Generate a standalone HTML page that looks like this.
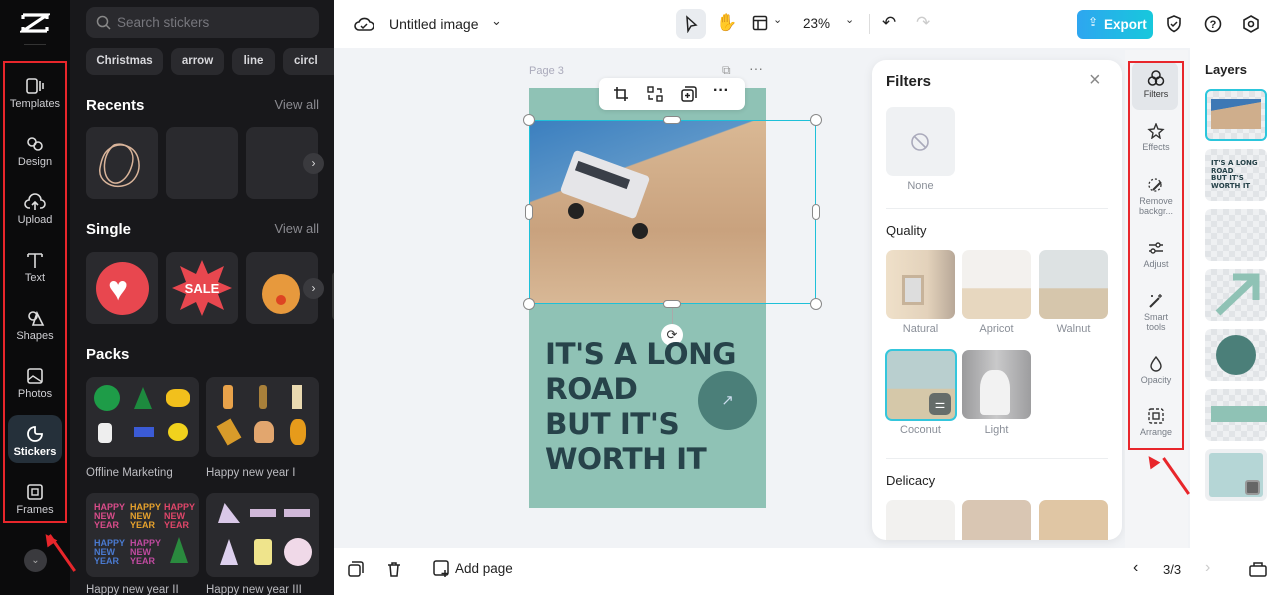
<!DOCTYPE html>
<html><head><meta charset="utf-8"><style>
*{box-sizing:border-box;margin:0;padding:0}
body{width:1280px;height:595px;overflow:hidden;font-family:"Liberation Sans",sans-serif;background:#f1f3f6;position:relative}
.a{position:absolute}
.rail{left:0;top:0;width:70px;height:595px;background:#0b0b0c}
.side{left:70px;top:0;width:264px;height:595px;background:#18181b;overflow:hidden}
.ri{position:absolute;left:6px;width:58px;text-align:center;color:#cfcfd3;font-size:11px}
.ri svg{display:block;margin:0 auto 3px}
.chip{position:absolute;top:48px;height:27px;border-radius:8px;background:#2a2a2e;color:#d8d8dc;font-size:11.5px;font-weight:bold;line-height:27px;text-align:center}
.h{position:absolute;color:#fff;font-weight:bold;font-size:15px}
.va{position:absolute;right:15px;color:#8a8a90;font-size:13px}
.tile{position:absolute;width:72px;height:72px;background:#2a2a2e;border-radius:8px}
.pk{position:absolute;width:113px;height:80px;background:#2a2a2e;border-radius:8px}
.top{left:334px;top:0;width:946px;height:48px;background:#fff}
.bot{left:334px;top:548px;width:946px;height:47px;background:#fff}
.fp{left:872px;top:60px;width:250px;height:480px;background:#fff;border-radius:14px;box-shadow:0 2px 10px rgba(0,0,0,.08);overflow:hidden}
.ft{position:absolute;width:69px;height:69px;border-radius:7px}
.fl{position:absolute;width:69px;text-align:center;font-size:11px;color:#8a8f98}
.tc{left:1125px;top:50px;width:63px;height:498px;background:#f4f5f7}
.ti{position:absolute;left:8px;width:46px;text-align:center;font-size:9px;color:#777d86;line-height:10px}
.ti svg{display:block;margin:0 auto 3px}
.lay{left:1190px;top:48px;width:90px;height:500px;background:#fff}
.lt{position:absolute;left:15px;width:62px;height:52px;border-radius:6px;background-color:#eef0f2;background-image:linear-gradient(45deg,#e1e4e7 25%,transparent 25%,transparent 75%,#e1e4e7 75%),linear-gradient(45deg,#e1e4e7 25%,transparent 25%,transparent 75%,#e1e4e7 75%);background-size:12px 12px;background-position:0 0,6px 6px}
.hd{position:absolute;width:12px;height:12px;border-radius:50%;background:#fff;border:1px solid #888}
</style></head><body>
<div class="a rail">
 <svg class="a" style="left:20px;top:12px" width="30" height="22" viewBox="0 0 30 22"><path d="M3 3h24L3 19h24M3 3v4M27 3v4M3 19v-4M27 19v-4" stroke="#fff" stroke-width="3.2" fill="none"/></svg>
 <div class="a" style="left:24px;top:44px;width:22px;height:1px;background:#333"></div>
 <div class="ri" style="top:77px"><svg width="20" height="18"><rect x="2" y="2" width="10" height="14" rx="2" stroke="#ddd" fill="none" stroke-width="1.6"/><path d="M15 4v10M18 6v6" stroke="#ddd" stroke-width="1.6"/></svg>Templates</div>
 <div class="ri" style="top:135px"><svg width="20" height="18"><circle cx="7" cy="7" r="4" stroke="#ddd" fill="none" stroke-width="1.6"/><circle cx="13" cy="11" r="4" stroke="#ddd" fill="none" stroke-width="1.6"/></svg>Design</div>
 <div class="ri" style="top:193px"><svg width="22" height="18"><path d="M6 15H5a4 4 0 010-8 6 6 0 0112 0 4 4 0 010 8h-1M11 9v8M8 12l3-3 3 3" stroke="#ddd" fill="none" stroke-width="1.6"/></svg>Upload</div>
 <div class="ri" style="top:251px"><svg width="20" height="18"><path d="M3 3h14M10 3v14M3 3v3M17 3v3" stroke="#ddd" fill="none" stroke-width="1.6"/></svg>Text</div>
 <div class="ri" style="top:309px"><svg width="20" height="18"><circle cx="8" cy="7" r="4" stroke="#ddd" fill="none" stroke-width="1.6"/><path d="M12 4l6 12H8z" stroke="#ddd" fill="none" stroke-width="1.6"/></svg>Shapes</div>
 <div class="ri" style="top:367px"><svg width="20" height="18"><rect x="3" y="2" width="14" height="14" rx="2" stroke="#ddd" fill="none" stroke-width="1.6"/><path d="M3 13l5-4 9 6" stroke="#ddd" fill="none" stroke-width="1.4"/></svg>Photos</div>
 <div class="a" style="left:8px;top:415px;width:54px;height:48px;border-radius:10px;background:#25303a"></div>
 <div class="ri" style="top:425px;color:#fff;font-weight:bold"><svg width="20" height="18"><path d="M10 2a7 7 0 107 7h-5a2 2 0 01-2-2z" stroke="#fff" fill="none" stroke-width="1.8"/></svg>Stickers</div>
 <div class="ri" style="top:483px"><svg width="20" height="18"><rect x="3" y="2" width="14" height="14" rx="2" stroke="#ddd" fill="none" stroke-width="1.6"/><rect x="7" y="6" width="6" height="6" stroke="#ddd" fill="none" stroke-width="1.4"/></svg>Frames</div>
 <div class="a" style="left:24px;top:549px;width:23px;height:23px;border-radius:50%;background:#3a3a3e;color:#aaa;font-size:10px;text-align:center;line-height:23px">⌄</div>
 <div class="a" style="left:3px;top:61px;width:64px;height:462px;border:2px solid #e8262b"></div>
</div>
<div class="a side">
 <div class="a" style="left:16px;top:7px;width:233px;height:31px;border-radius:9px;background:#2a2a2e"></div>
 <svg class="a" style="left:26px;top:15px" width="15" height="15"><circle cx="6.5" cy="6.5" r="5" stroke="#888" fill="none" stroke-width="1.5"/><path d="M10 10l4 4" stroke="#888" stroke-width="1.5"/></svg>
 <div class="a" style="left:47px;top:15px;color:#77777d;font-size:13.5px">Search stickers</div>
 <div class="chip" style="left:16px;width:77px">Christmas</div>
 <div class="chip" style="left:101px;width:53px">arrow</div>
 <div class="chip" style="left:162px;width:43px">line</div>
 <div class="chip" style="left:213px;width:51px;border-radius:8px 0 0 8px;text-align:left;padding-left:11px">circl</div>
 <div class="h" style="left:16px;top:97px">Recents</div><div class="va" style="top:97px">View all</div>
 <div class="tile" style="left:16px;top:127px"><svg width="72" height="72"><g stroke="#d9b49a" fill="none" stroke-width="1.5"><path d="M20 25c10-12 28-8 32 6s-4 26-16 28-24-6-22-18 6-16 6-16"/><path d="M28 18c12-4 22 6 18 20s-14 22-22 16-8-26 4-36"/></g></svg></div>
 <div class="tile" style="left:96px;top:127px"></div>
 <div class="tile" style="left:176px;top:127px"></div>
 <div class="a" style="left:233px;top:153px;width:21px;height:21px;border-radius:50%;background:#3a3a3e;color:#ddd;font-size:12px;text-align:center;line-height:21px">›</div>
 <div class="h" style="left:16px;top:221px">Single</div><div class="va" style="top:221px">View all</div>
 <div class="tile" style="left:16px;top:252px"><div class="a" style="left:10px;top:10px;width:53px;height:53px;border-radius:50%;background:#e8474f"></div><div class="a" style="left:22px;top:20px;color:#fff;font-size:34px;line-height:34px">♥</div></div>
 <div class="tile" style="left:96px;top:252px"><svg width="72" height="72"><polygon points="36,8 42,22 58,14 52,30 66,36 52,42 58,58 42,50 36,64 30,50 14,58 20,42 6,36 20,30 14,14 30,22" fill="#e8474f"/><text x="36" y="41" font-size="13" font-weight="bold" fill="#fff" text-anchor="middle" font-family="Liberation Sans">SALE</text></svg></div>
 <div class="tile" style="left:176px;top:252px"><div class="a" style="left:16px;top:22px;width:38px;height:40px;border-radius:50%;background:#e7993d"></div><div class="a" style="left:30px;top:43px;width:10px;height:10px;border-radius:50%;background:#d42"></div></div>
 <div class="a" style="left:233px;top:278px;width:21px;height:21px;border-radius:50%;background:#3a3a3e;color:#ddd;font-size:12px;text-align:center;line-height:21px">›</div>
 <div class="a" style="left:262px;top:272px;width:8px;height:48px;border-radius:4px;background:#333"></div>
 <div class="h" style="left:16px;top:346px">Packs</div>
 <div class="pk" style="left:16px;top:377px"><div class="a" style="left:8px;top:8px;width:26px;height:26px;border-radius:50%;background:#1e9c48"></div><div class="a" style="left:48px;top:10px;width:18px;height:22px;background:#1d8a3e;clip-path:polygon(50% 0,100% 100%,0 100%)"></div><div class="a" style="left:80px;top:12px;width:24px;height:18px;background:#f2c01c;border-radius:40%"></div><div class="a" style="left:12px;top:46px;width:14px;height:20px;background:#eee;border-radius:4px"></div><div class="a" style="left:48px;top:50px;width:20px;height:10px;background:#3b5bd6"></div><div class="a" style="left:82px;top:46px;width:20px;height:18px;background:#f1d21d;border-radius:50%"></div></div>
 <div class="pk" style="left:136px;top:377px"><div class="a" style="left:17px;top:8px;width:10px;height:24px;background:#e8a24a;border-radius:3px"></div><div class="a" style="left:53px;top:8px;width:8px;height:24px;background:#a8803a;border-radius:3px"></div><div class="a" style="left:86px;top:8px;width:10px;height:24px;background:#e9d9b0"></div><div class="a" style="left:15px;top:44px;width:16px;height:22px;background:#d89b2a;transform:rotate(-30deg)"></div><div class="a" style="left:48px;top:44px;width:20px;height:22px;background:#e2a66e;border-radius:40% 40% 4px 4px"></div><div class="a" style="left:84px;top:42px;width:16px;height:26px;background:#e69b1b;border-radius:40%"></div></div>
 <div class="a" style="left:16px;top:467px;color:#bdbdc2;font-size:11.5px">Offline Marketing</div>
 <div class="a" style="left:136px;top:467px;color:#bdbdc2;font-size:11.5px">Happy new year I</div>
 <div class="pk" style="left:16px;top:493px;height:84px"><div class="a" style="left:8px;top:10px;font-size:9px;font-weight:bold;color:#d94c8a;line-height:9px">HAPPY<br>NEW<br>YEAR</div><div class="a" style="left:44px;top:10px;font-size:9px;font-weight:bold;color:#e7a22c;line-height:9px">HAPPY<br>NEW<br>YEAR</div><div class="a" style="left:78px;top:10px;font-size:9px;font-weight:bold;color:#e0466a;line-height:9px">HAPPY<br>NEW<br>YEAR</div><div class="a" style="left:8px;top:46px;font-size:9px;font-weight:bold;color:#4a7ad0;line-height:9px">HAPPY<br>NEW<br>YEAR</div><div class="a" style="left:44px;top:46px;font-size:9px;font-weight:bold;color:#c04aa0;line-height:9px">HAPPY<br>NEW<br>YEAR</div><div class="a" style="left:84px;top:44px;width:18px;height:26px;background:#2a8a3e;clip-path:polygon(50% 0,100% 100%,0 100%)"></div></div>
 <div class="pk" style="left:136px;top:493px;height:84px"><div class="a" style="left:12px;top:10px;width:22px;height:20px;background:#d9c8e8;clip-path:polygon(30% 0,100% 100%,0 100%)"></div><div class="a" style="left:44px;top:16px;width:26px;height:8px;background:#d0b8d8"></div><div class="a" style="left:78px;top:16px;width:26px;height:8px;background:#d0b8d8"></div><div class="a" style="left:14px;top:46px;width:18px;height:26px;background:#ddd0ee;clip-path:polygon(50% 0,100% 100%,0 100%)"></div><div class="a" style="left:48px;top:46px;width:18px;height:26px;background:#efe48c;border-radius:3px"></div><div class="a" style="left:78px;top:45px;width:28px;height:28px;background:#f0d9e8;border-radius:50%"></div></div>
 <div class="a" style="left:16px;top:584px;color:#bdbdc2;font-size:11.5px">Happy new year II</div>
 <div class="a" style="left:136px;top:584px;color:#bdbdc2;font-size:11.5px">Happy new year III</div>
</div>
<div class="a" style="left:48px;top:535px;width:3px;height:44px;background:#e8262b;transform:rotate(-35deg);transform-origin:top"></div>
<div class="a" style="left:43px;top:533px;width:0;height:0;border-left:6px solid transparent;border-right:6px solid transparent;border-bottom:12px solid #e8262b;transform:rotate(-35deg)"></div>

<div class="a top">
 <svg class="a" style="left:20px;top:15px" width="20" height="18"><path d="M5 15a4 4 0 010-8 6 6 0 0111 0 4 4 0 010 8z" stroke="#222" fill="none" stroke-width="1.6"/><path d="M7 11l2 2 4-4" stroke="#222" fill="none" stroke-width="1.5"/></svg>
 <div class="a" style="left:55px;top:16px;font-size:14px;color:#222">Untitled image</div>
 <div class="a" style="left:157px;top:13px;font-size:13px;color:#333">⌄</div>
 <div class="a" style="left:342px;top:9px;width:30px;height:30px;border-radius:7px;background:#e9ecf0"></div>
 <svg class="a" style="left:349px;top:15px" width="16" height="18"><path d="M4 2l9 8-5 1-3 5z" stroke="#222" fill="none" stroke-width="1.5"/></svg>
 <div class="a" style="left:382px;top:13px;font-size:17px;color:#222">✋</div>
 <svg class="a" style="left:418px;top:15px" width="16" height="16"><rect x="1.5" y="1.5" width="13" height="13" rx="1.5" stroke="#222" fill="none" stroke-width="1.5"/><path d="M1.5 5.5h13M6 5.5v9" stroke="#222" stroke-width="1.5"/></svg>
 <div class="a" style="left:439px;top:13px;font-size:11px;color:#333">⌄</div>
 <div class="a" style="left:469px;top:16px;font-size:13.5px;color:#222">23%</div>
 <div class="a" style="left:511px;top:13px;font-size:11px;color:#333">⌄</div>
 <div class="a" style="left:535px;top:14px;width:1px;height:20px;background:#ddd"></div>
 <div class="a" style="left:548px;top:13px;font-size:17px;color:#222">↶</div>
 <div class="a" style="left:582px;top:13px;font-size:17px;color:#ccc">↷</div>
 <div class="a" style="left:743px;top:10px;width:76px;height:29px;border-radius:6px;background:linear-gradient(90deg,#2ea6f0,#17c8dc);color:#fff;font-weight:bold;font-size:13.5px;line-height:29px;padding-left:27px">Export</div>
 <div class="a" style="left:754px;top:15px;font-size:12px;color:#fff">⇪</div>
 <svg class="a" style="left:832px;top:15px" width="16" height="18"><path d="M8 1l6 2.5v5c0 4-3 6.5-6 8-3-1.5-6-4-6-8v-5z" stroke="#222" fill="none" stroke-width="1.6"/><path d="M5 9l2 2 4-4" stroke="#222" fill="none" stroke-width="1.5"/></svg>
 <svg class="a" style="left:870px;top:15px" width="18" height="18"><circle cx="9" cy="9" r="7.5" stroke="#222" fill="none" stroke-width="1.6"/><text x="9" y="13" font-size="11" font-weight="bold" text-anchor="middle" fill="#222" font-family="Liberation Sans">?</text></svg>
 <svg class="a" style="left:908px;top:15px" width="18" height="18"><path d="M9 1l7 4v8l-7 4-7-4V5z" stroke="#222" fill="none" stroke-width="1.6"/><circle cx="9" cy="9" r="2.5" stroke="#222" fill="none" stroke-width="1.6"/></svg>
</div>

<!-- canvas -->
<div class="a" style="left:529px;top:65px;font-size:11px;color:#aab">Page 3</div>
<div class="a" style="left:722px;top:63px;font-size:12px;color:#999">⧉</div>
<div class="a" style="left:749px;top:60px;font-size:14px;color:#777">···</div>
<div class="a" style="left:529px;top:88px;width:237px;height:420px;background:#8fc2b5"></div>
<div class="a" style="left:529px;top:121px;width:237px;height:183px;background:linear-gradient(160deg,#3b7fbf 0%,#5b95c8 30%,transparent 30.5%),linear-gradient(180deg,#d9b894,#c9a27e 60%,#d8b896)"></div>
<div class="a" style="left:565px;top:162px;width:80px;height:45px;background:#e5e5e8;border-radius:4px;transform:rotate(20deg)"></div>
<div class="a" style="left:575px;top:170px;width:55px;height:10px;background:#3a3f48;transform:rotate(20deg)"></div>
<div class="a" style="left:568px;top:203px;width:16px;height:16px;background:#222;border-radius:50%"></div>
<div class="a" style="left:632px;top:223px;width:16px;height:16px;background:#222;border-radius:50%"></div>
<div class="a" style="left:529px;top:120px;width:287px;height:184px;border:1.5px solid #1ec0d8"></div>
<div class="hd" style="left:523px;top:114px"></div><div class="hd" style="left:810px;top:114px"></div>
<div class="hd" style="left:523px;top:298px"></div><div class="hd" style="left:810px;top:298px"></div>
<div class="a" style="left:663px;top:116px;width:18px;height:8px;border-radius:4px;background:#fff;border:1px solid #888"></div>
<div class="a" style="left:663px;top:300px;width:18px;height:8px;border-radius:4px;background:#fff;border:1px solid #888"></div>
<div class="a" style="left:525px;top:204px;width:8px;height:16px;border-radius:4px;background:#fff;border:1px solid #888"></div>
<div class="a" style="left:812px;top:204px;width:8px;height:16px;border-radius:4px;background:#fff;border:1px solid #888"></div>
<div class="a" style="left:672px;top:308px;width:1px;height:18px;background:#aaa"></div>
<div class="a" style="left:661px;top:324px;width:22px;height:22px;border-radius:50%;background:#fff;text-align:center;line-height:22px;font-size:13px;color:#333">⟳</div>
<div class="a" style="left:599px;top:78px;width:146px;height:32px;border-radius:7px;background:#fff;box-shadow:0 1px 5px rgba(0,0,0,.12)">
 <svg class="a" style="left:14px;top:8px" width="16" height="16"><path d="M4 1v11h11M1 4h11v11" stroke="#222" fill="none" stroke-width="1.6"/></svg>
 <svg class="a" style="left:48px;top:8px" width="16" height="16"><rect x="1" y="1" width="5" height="5" stroke="#222" fill="none" stroke-width="1.4"/><rect x="10" y="10" width="5" height="5" stroke="#222" fill="none" stroke-width="1.4"/><path d="M10 3h4v4M6 13H2V9" stroke="#222" fill="none" stroke-width="1.4"/></svg>
 <svg class="a" style="left:82px;top:8px" width="16" height="16"><rect x="1" y="4" width="11" height="11" rx="2" stroke="#222" fill="none" stroke-width="1.5"/><path d="M4 1h9a2 2 0 012 2v9M6.5 7v5M4 9.5h5" stroke="#222" fill="none" stroke-width="1.5"/></svg>
 <div class="a" style="left:114px;top:4px;font-size:16px;font-weight:bold;color:#222">···</div>
</div>
<div class="a" style="left:545px;top:337px;font-family:'DejaVu Sans',sans-serif;font-weight:bold;font-size:29.5px;line-height:35px;color:#27434a;letter-spacing:-0.5px">IT'S A LONG<br>ROAD<br>BUT IT'S<br>WORTH IT</div>
<div class="a" style="left:698px;top:371px;width:59px;height:59px;border-radius:50%;background:#4b7f79;color:#cde;text-align:center;line-height:59px;font-size:15px">↗</div>

<div class="a bot">
 <svg class="a" style="left:14px;top:13px" width="16" height="16"><rect x="1" y="4" width="11" height="11" rx="2" stroke="#222" fill="none" stroke-width="1.5"/><path d="M4 1h9a2 2 0 012 2v9" stroke="#222" fill="none" stroke-width="1.5"/></svg>
 <svg class="a" style="left:52px;top:13px" width="16" height="16"><path d="M2 4h12M6 4V2h4v2M4 4l1 11h6l1-11" stroke="#222" fill="none" stroke-width="1.5"/></svg>
 <svg class="a" style="left:99px;top:12px" width="18" height="18"><rect x="1" y="1" width="14" height="14" rx="2" stroke="#222" fill="none" stroke-width="1.5"/><path d="M12 10v7M8.5 13.5h7" stroke="#222" stroke-width="1.5"/></svg>
 <div class="a" style="left:121px;top:13px;font-size:13.5px;color:#222">Add page</div>
 <div class="a" style="left:799px;top:11px;font-size:16px;color:#222">‹</div>
 <div class="a" style="left:829px;top:14px;font-size:13px;color:#222">3/3</div>
 <div class="a" style="left:871px;top:11px;font-size:16px;color:#ccc">›</div>
 <svg class="a" style="left:915px;top:13px" width="18" height="16"><rect x="1" y="5" width="16" height="10" rx="1.5" stroke="#222" fill="none" stroke-width="1.5"/><path d="M5 5V2h8v3" stroke="#222" fill="none" stroke-width="1.5"/></svg>
</div>

<div class="a fp">
 <div class="a" style="left:14px;top:13px;font-size:15px;font-weight:bold;color:#222">Filters</div>
 <div class="a" style="left:217px;top:9px;font-size:20px;color:#888">×</div>
 <div class="ft" style="left:14px;top:47px;background:#eff1f3"></div>
 <svg class="a" style="left:38px;top:72px" width="20" height="20"><circle cx="10" cy="10" r="8" stroke="#aab" fill="none" stroke-width="1.6"/><path d="M4.5 4.5l11 11" stroke="#aab" stroke-width="1.6"/></svg>
 <div class="fl" style="left:14px;top:120px">None</div>
 <div class="a" style="left:14px;top:148px;width:222px;height:1px;background:#eceef0"></div>
 <div class="a" style="left:14px;top:163px;font-size:13px;color:#222">Quality</div>
 <div class="ft" style="left:14px;top:190px;background:linear-gradient(90deg,#efe0c9,#e3d2bb 60%,#b8a898)"></div>
 <div class="a" style="left:30px;top:215px;width:22px;height:30px;border:3px solid #c7b39a;background:#ddd"></div>
 <div class="ft" style="left:90px;top:190px;background:linear-gradient(180deg,#f3f1ee 55%,#e7d7bf 56%)"></div>
 <div class="ft" style="left:167px;top:190px;background:linear-gradient(180deg,#dde2e3 55%,#d6c6ac 56%)"></div>
 <div class="fl" style="left:14px;top:263px">Natural</div><div class="fl" style="left:90px;top:263px">Apricot</div><div class="fl" style="left:167px;top:263px">Walnut</div>
 <div class="ft" style="left:13px;top:289px;width:72px;height:72px;border:2px solid #34c6dc;background:linear-gradient(180deg,#b9cfcf 55%,#d5c8a9 56%)"></div>
 <div class="a" style="left:57px;top:333px;width:22px;height:22px;border-radius:5px;background:#666d6a;color:#fff;text-align:center;font-size:12px;line-height:22px">⚌</div>
 <div class="ft" style="left:90px;top:290px;background:linear-gradient(90deg,#9a9a9c,#c9c9ca 50%,#9d9d9f)"></div>
 <div class="a" style="left:108px;top:310px;width:30px;height:45px;background:#f2f2f2;border-radius:40% 40% 4px 4px"></div>
 <div class="fl" style="left:14px;top:364px">Coconut</div><div class="fl" style="left:90px;top:364px">Light</div>
 <div class="a" style="left:14px;top:398px;width:222px;height:1px;background:#eceef0"></div>
 <div class="a" style="left:14px;top:413px;font-size:13px;color:#222">Delicacy</div>
 <div class="ft" style="left:14px;top:440px;background:#f2f1ef"></div>
 <div class="ft" style="left:90px;top:440px;background:#d9c6b3"></div>
 <div class="ft" style="left:167px;top:440px;background:#e0c6a4"></div>
</div>

<div class="a tc">
 <div class="a" style="left:7px;top:12px;width:46px;height:48px;border-radius:7px;background:#e3e6ea"></div>
 <div class="ti" style="top:20px;color:#333"><svg width="18" height="16"><circle cx="9" cy="5" r="4" stroke="#222" fill="none" stroke-width="1.5"/><circle cx="5.5" cy="11" r="4" stroke="#222" fill="none" stroke-width="1.5"/><circle cx="12.5" cy="11" r="4" stroke="#222" fill="none" stroke-width="1.5"/></svg>Filters</div>
 <div class="ti" style="top:73px"><svg width="18" height="16"><path d="M9 1l2 5 5 .5-4 3.5 1 5-4-3-4 3 1-5-4-3.5 5-.5z" stroke="#333" fill="none" stroke-width="1.4"/></svg>Effects</div>
 <div class="ti" style="top:127px"><svg width="18" height="16"><circle cx="8" cy="8" r="6" stroke="#333" fill="none" stroke-width="1.3" stroke-dasharray="2 2"/><path d="M6 13l8-8" stroke="#333" stroke-width="2"/></svg>Remove<br>backgr...</div>
 <div class="ti" style="top:190px"><svg width="18" height="16"><path d="M2 5h14M2 11h14" stroke="#333" stroke-width="1.4"/><circle cx="11" cy="5" r="2" fill="#fff" stroke="#333" stroke-width="1.4"/><circle cx="6" cy="11" r="2" fill="#fff" stroke="#333" stroke-width="1.4"/></svg>Adjust</div>
 <div class="ti" style="top:243px"><svg width="18" height="16"><path d="M3 14l9-9" stroke="#333" stroke-width="2"/><path d="M13 1v4M11 3h4M5 2v2M4 3h2" stroke="#333" stroke-width="1.2"/></svg>Smart<br>tools</div>
 <div class="ti" style="top:306px"><svg width="18" height="16"><path d="M9 1c3 4 5 6.5 5 9a5 5 0 01-10 0c0-2.5 2-5 5-9z" stroke="#333" fill="none" stroke-width="1.4"/></svg>Opacity</div>
 <div class="ti" style="top:358px"><svg width="18" height="16"><rect x="2" y="1" width="14" height="14" rx="2" stroke="#333" fill="none" stroke-width="1.4" stroke-dasharray="3 2"/><rect x="6" y="5" width="6" height="6" stroke="#333" fill="none" stroke-width="1.4"/></svg>Arrange</div>
 <div class="a" style="left:3px;top:11px;width:56px;height:389px;border:2px solid #e8262b"></div>
</div>
<div class="a" style="left:1162px;top:458px;width:3px;height:44px;background:#e8262b;transform:rotate(-35deg);transform-origin:top"></div>
<div class="a" style="left:1146px;top:455px;width:0;height:0;border-left:6px solid transparent;border-right:6px solid transparent;border-bottom:12px solid #e8262b;transform:rotate(-35deg)"></div>

<div class="a lay">
 <div class="a" style="left:15px;top:14px;font-size:13px;font-weight:bold;color:#222">Layers</div>
 <div class="lt" style="top:41px;border:2px solid #2bc6dc"><div class="a" style="left:4px;top:8px;width:50px;height:30px;background:linear-gradient(170deg,#3d78b5 30%,#cfae8c 31%)"></div></div>
 <div class="lt" style="top:101px"><div class="a" style="left:6px;top:11px;font-size:7px;font-weight:bold;color:#27434a;line-height:7.5px;font-family:'DejaVu Sans',sans-serif">IT'S A LONG<br>ROAD<br>BUT IT'S<br>WORTH IT</div></div>
 <div class="lt" style="top:161px"></div>
 <div class="lt" style="top:221px"><svg width="62" height="52"><path d="M13 44L50 9M28 8h23v23" stroke="#8fc2b5" stroke-width="7" fill="none"/></svg></div>
 <div class="lt" style="top:281px"><div class="a" style="left:11px;top:6px;width:40px;height:40px;border-radius:50%;background:#4b7f79"></div></div>
 <div class="lt" style="top:341px"><div class="a" style="left:6px;top:17px;width:56px;height:16px;background:#8fc2b5"></div></div>
 <div class="lt" style="top:401px;background:#eef0f2"><div class="a" style="left:4px;top:4px;width:54px;height:44px;border-radius:3px;background:#b5d6d6"></div><div class="a" style="left:40px;top:31px;width:15px;height:15px;border-radius:3px;background:#666;border:2px solid #999"></div></div>
</div>
</body></html>
